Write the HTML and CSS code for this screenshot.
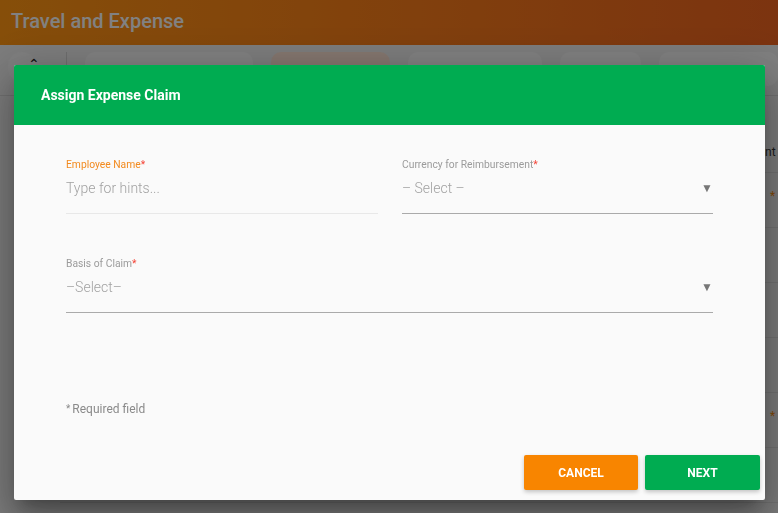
FILE: index.html
```html
<!DOCTYPE html>
<html lang="en">
<head>
  <meta charset="UTF-8" />
  <title>Travel and Expense</title>
  <link rel="stylesheet" href="styles.css">
</head>
<body>

<div id="app">
  <div id="appbar">Travel and Expense</div>
  <div id="toolbar">
    <div class="round-btn"><span class="chev">&#8963;</span></div>
    <div class="divider"></div>
    <div class="tab" style="width:170px"></div>
    <div class="tab active" style="width:119px"></div>
    <div class="tab" style="width:135px"></div>
    <div class="tab" style="width:82px"></div>
    <div class="tab" style="width:120px"></div>
  </div>
  <div id="list">
    <div class="row head"><span class="col-right">nt I</span></div>
    <div class="row"><span class="col-right mark">*</span></div>
    <div class="row"></div>
    <div class="row"></div>
    <div class="row"></div>
    <div class="row"><span class="col-right mark">*</span></div>
    <div class="row"></div>
  </div>
</div>

<div id="overlay"></div>

<div id="dialog">
  <div class="dlg-head">Assign Expense Claim</div>
  <div class="dlg-body">
    <div class="form-grid">
      <div class="field">
        <label class="lbl focus">Employee Name<span class="req">*</span></label>
        <div class="input light">Type for hints...</div>
      </div>
      <div class="field">
        <label class="lbl">Currency for Reimbursement<span class="req">*</span></label>
        <div class="input select">– Select –<span class="arrow">&#9660;</span></div>
      </div>
      <div class="field wide">
        <label class="lbl">Basis of Claim<span class="req">*</span></label>
        <div class="input select">–Select–<span class="arrow">&#9660;</span></div>
      </div>
    </div>
    <div class="required-note"><span class="star">*</span>Required field</div>
  </div>
  <div class="dlg-foot">
    <button class="btn cancel">Cancel</button>
    <button class="btn next">Next</button>
  </div>
</div>

</body>
</html>
```

FILE: styles.css
```css
body {
  margin: 0; padding: 0;
  font-family: Roboto, 'Liberation Sans', sans-serif;
  background: #ececec;
  overflow: hidden;
  width: 778px;
  height: 513px;
}
#app {
  height: 513px;
}
#appbar {
  height: 45px;
  line-height: 43px;
  padding-left: 11px;
  background: linear-gradient(90deg, #fd9412, #eb621f);
  color: #f4f4f4;
  font-size: 20px;
  font-weight: 500;
}
#toolbar {
  height: 51px;
  display: flex;
  align-items: flex-start;
  padding: 7px 0 0 8px;
  box-sizing: border-box;
  border-bottom: 1px solid #d6d6d6;
  gap: 18px;
}
.round-btn {
  width: 28px;
  height: 30px;
  border-radius: 14px;
  background: #f1f1f1;
  text-align: center;
  position: relative;
}
.chev {
  position: absolute;
  left: 20px;
  top: 4px;
  font-size: 14px;
  color: #222;
}
.divider {
  width: 1px;
  height: 30px;
  background: #d0d0d0;
  margin-left: 12px;
}
.tab {
  height: 34px;
  border-radius: 10px;
  background: #f4f4f4;
}
.tab.active {
  background: #fbe1d2;
}
#list {
  margin-left: 60px;
}
.row {
  height: 55px;
  border-bottom: 1px solid #dadada;
  position: relative;
  box-sizing: border-box;
}
.row.head {
  height: 77px;
}
.col-right {
  position: absolute;
  left: 705px;
  top: 49px;
  font-size: 12px;
  color: #333;
  white-space: nowrap;
}
.col-right.mark {
  left: 710px;
  top: 16px;
  color: #f58a0f;
}
#overlay {
  position: fixed;
  inset: 0;
  background: rgba(0,0,0,0.47);
}

/* dialog */
#dialog {
  position: fixed;
  left: 14px;
  top: 65px;
  width: 751px;
  height: 435px;
  background: #fafafa;
  border-radius: 2px;
  display: flex;
  flex-direction: column;
  box-shadow: 0 11px 15px -7px rgba(0,0,0,.25), 0 24px 38px 3px rgba(0,0,0,.2), 0 9px 46px 8px rgba(0,0,0,.2);
}
.dlg-head {
  height: 60px;
  line-height: 60px;
  background: #00ac51;
  color: #fff;
  padding-left: 27px;
  font-size: 14px;
  font-weight: 700;
  border-radius: 2px 2px 0 0;
}
.dlg-body {
  flex: 1;
  padding: 32px 52px 0 52px;
}
.form-grid {
  display: grid;
  grid-template-columns: 312px 311px;
  column-gap: 24px;
  row-gap: 42px;
}
.field.wide {
  grid-column: 1 / 3;
}
.lbl {
  display: block;
  height: 16px;
  line-height: 16px;
  font-size: 10.3px;
  color: #9b9b9b;
}
.lbl.focus {
  color: #f28a1e;
}
.req {
  color: #f44336;
}
.input {
  height: 41px;
  box-sizing: border-box;
  padding-top: 3px;
  line-height: 24px;
  font-size: 14px;
  color: #a2a2a2;
  font-weight: 300;
  border-bottom: 1px solid #aaaaaa;
  position: relative;
}
.input.light {
  border-bottom-color: #e8e8e8;
}
.arrow {
  position: absolute;
  right: 0;
  top: 3px;
  font-size: 12px;
  color: #777;
}
.required-note {
  margin-top: 88px;
  font-size: 12px;
  line-height: 16px;
  color: #8a8a8a;
}
.star {
  font-size: 10px;
  margin-right: 2px;
  vertical-align: 1px;
}
.dlg-foot {
  display: flex;
  justify-content: flex-end;
  gap: 7px;
  padding: 0 5px 10px 0;
}
.btn {
  width: 114px;
  height: 35px;
  border: none;
  border-radius: 2px;
  color: #fff;
  font-family: Roboto, sans-serif;
  font-size: 12px;
  font-weight: 700;
  text-transform: uppercase;
  box-shadow: 0 2px 4px rgba(0,0,0,.22);
}
.btn.cancel {
  background: #f88500;
}
.btn.next {
  background: #00ac51;
  width: 115px;
}
```
